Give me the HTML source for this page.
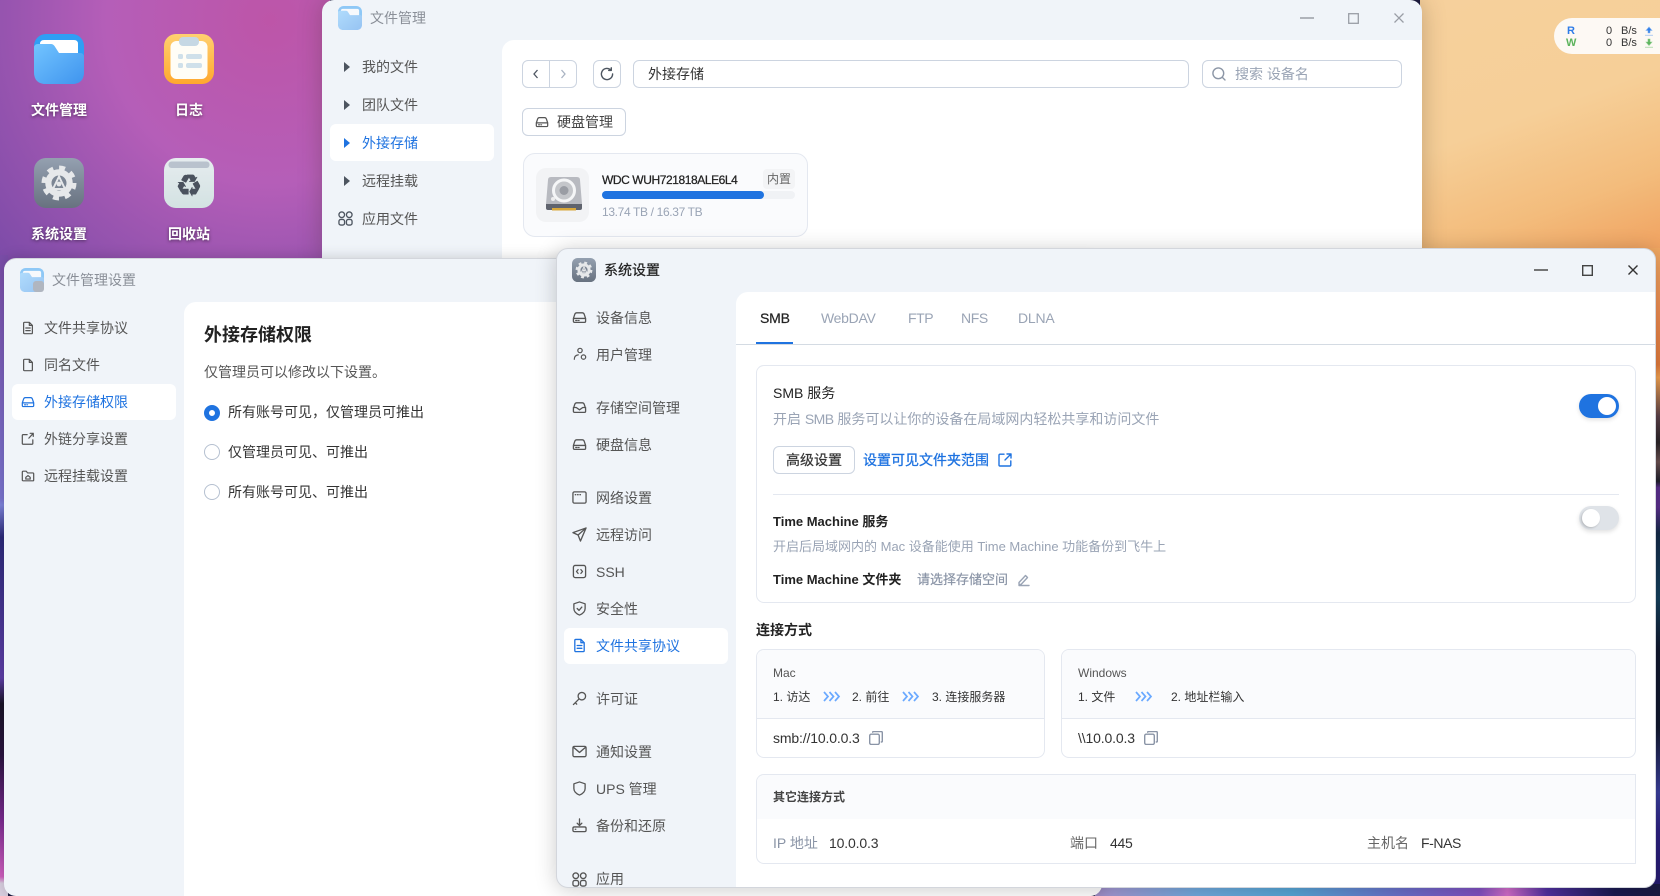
<!DOCTYPE html>
<html lang="zh-CN"><head><meta charset="utf-8"><title>飞牛</title>
<style>
*{box-sizing:border-box}
html,body{margin:0;padding:0;width:1660px;height:896px;overflow:hidden}
body{background:#1a1a40;font-family:"Liberation Sans","Noto Sans CJK SC",sans-serif;font-size:14px;color:#333}
#r{position:relative;width:1660px;height:896px;overflow:hidden}
.a{position:absolute}
.t{position:absolute;white-space:nowrap;line-height:20px;height:20px}
.w{position:absolute;overflow:hidden}
svg{position:absolute;display:block;overflow:visible}
.i{fill:none;stroke:currentColor;stroke-width:1.4;stroke-linecap:round;stroke-linejoin:round}
.dl{color:#fff;font-weight:700;text-shadow:0 1px 3px rgba(0,0,0,.5);font-size:14px;text-align:center;width:100px}
.nv{color:#555}
.bl{color:#1f73e0}
.gr{color:#9aa4b5}
.bd{border:1px solid #ccd4e0;border-radius:6px;background:#fff}
.card{border:1px solid #e4e8f0;border-radius:8px;background:#fff}
.s12{font-size:12px}
.b{font-weight:700}
</style></head>
<body><div id="r">
<svg width="0" height="0" style="position:absolute">
<defs>
<symbol id="hd" viewBox="0 0 16 16"><path class="i" d="M1.500 9 3 4.500Q3.600 3 5 3h6q1.400 0 2 1.500L14.500 9v3q0 1.200-1.200 1.200H2.700Q1.500 13.200 1.500 12zM1.500 9h13M4 11.200h1.500M7 11.200h.5"/></symbol>
<symbol id="doc" viewBox="0 0 16 16"><path class="i" d="M3 2.500q0-1 1-1h5.500L13 5v8.500q0 1-1 1H4q-1 0-1-1zM9.500 1.500V5H13M5.500 8h5M5.500 11h5"/></symbol>
<symbol id="copy" viewBox="0 0 14 14"><rect class="i" x=".7" y="3.200" width="9.600" height="10.200" rx="1.500"/><path class="i" d="M3.700 1.200q0-.6.6-.6h8q1 0 1 1v8.500q0 .9-1 .9"/></symbol>
<symbol id="gear" viewBox="0 0 50 50">
<defs><linearGradient id="gg" x1="0" y1="0" x2="0" y2="1"><stop offset="0" stop-color="#94a0b0"/><stop offset="1" stop-color="#687280"/></linearGradient></defs>
<rect width="50" height="50" rx="12" fill="url(#gg)"/>
<circle cx="25" cy="25" r="15" fill="none" stroke="#e6e8ea" stroke-width="5" stroke-dasharray="5.900 5.880"/>
<circle cx="25" cy="25" r="10.500" fill="none" stroke="#e6e8ea" stroke-width="6.500"/>
<circle cx="25" cy="25" r="7.500" fill="#7c8694"/>
<path d="M25 18.500 31 31H19Z" fill="none" stroke="#e6e8ea" stroke-width="2"/>
<circle cx="25" cy="26" r="2.400" fill="#e6e8ea"/>
</symbol>
<symbol id="folder" viewBox="0 0 50 50">
<defs><linearGradient id="fg" x1="0" y1="0" x2="1" y2="1"><stop offset="0" stop-color="#72c4ff"/><stop offset="1" stop-color="#3f94ee"/></linearGradient></defs>
<rect width="50" height="50" rx="12" fill="#2f9ef5"/>
<path d="M6 10q0-4 4-4h30q4 0 4 4v12H6z" fill="#fff"/>
<path d="M0 14q0-4 4-4h13q2 0 3.500 2L25 19h21q4 0 4 4v15q0 12-12 12H12Q0 50 0 38z" fill="url(#fg)"/>
</symbol>
</defs>
</svg>

<!-- wallpaper -->
<div class="a" style="left:0;top:0;width:330px;height:262px;background:radial-gradient(circle at 270px 20px,#bd55a8 0,#b55eb8 45%,#9a55b0 70%,#7c4ba8 100%)"></div>
<div class="a" style="left:1420px;top:0;width:240px;height:256px;background:linear-gradient(160deg,#f6d09c 0,#f6cf98 45%,#f3bc7c 75%,#f0a05e 100%)"></div>
<div class="a" style="left:0;top:255px;width:8px;height:641px;background:linear-gradient(180deg,#7a4da8 0,#7a74cf 38%,#7e85dc 39%,#2c2a7a 44%,#5e3fa8 66%,#1a1428 70%,#2a1440 78%,#7a2a90 88%,#d060c0 97%,#d9cfe0 98%)"></div>
<div class="a" style="left:1650px;top:248px;width:10px;height:648px;background:linear-gradient(180deg,#f0a862 0,#ec8a50 10%,#e07a3c 18%,#f0a050 20%,#5a4048 26%,#2a2428 30%,#6a5050 33%,#20202c 36%,#5a2f8c 37%,#5a2f8c 40%,#142a48 44%,#14405c 54%,#12182e 62%,#12182e 74%,#3a3f9c 84%,#2c2080 90%,#241a6a 100%)"></div>
<div class="a" style="left:1095px;top:884px;width:565px;height:12px;background:linear-gradient(90deg,#a893cf 0,#6fa8dc 18%,#55a5d5 35%,#6a6cc8 55%,#8050c0 68%,#d06cc8 73%,#5030a0 80%,#1a1a50 92%,#1a1a40 100%)"></div>

<!-- desktop icons -->
<svg style="left:34px;top:34px" width="50" height="50" viewBox="0 0 50 50"><use href="#folder"/></svg>
<svg style="left:164px;top:34px" width="50" height="50" viewBox="0 0 50 50">
<defs><linearGradient id="og" x1="0" y1="0" x2="0" y2="1"><stop offset="0" stop-color="#ffd070"/><stop offset="1" stop-color="#ffa82e"/></linearGradient></defs>
<rect width="50" height="50" rx="12" fill="url(#og)"/>
<rect x="6.500" y="7" width="37" height="38" rx="6" fill="#fffdf6"/>
<rect x="15" y="3" width="20" height="9" rx="4" fill="#c6d8e4"/>
<rect x="14" y="20" width="5" height="5" rx="1.500" fill="#cfe0ea"/><rect x="22" y="20" width="16" height="5" rx="2" fill="#cfe0ea"/>
<rect x="14" y="29" width="5" height="5" rx="1.500" fill="#cfe0ea"/><rect x="22" y="29" width="16" height="5" rx="2" fill="#cfe0ea"/>
</svg>
<svg style="left:34px;top:158px" width="50" height="50" viewBox="0 0 50 50"><use href="#gear"/></svg>
<svg style="left:164px;top:158px" width="50" height="50" viewBox="0 0 50 50">
<defs><linearGradient id="rg" x1="0" y1="0" x2="0" y2="1"><stop offset="0" stop-color="#e6ecef"/><stop offset="1" stop-color="#d3e2e2"/></linearGradient></defs>
<rect width="50" height="50" rx="12" fill="url(#rg)"/>
<rect x="4.500" y="3.500" width="41" height="6.500" rx="3" fill="#b9c2cd"/>
<text x="25" y="38" text-anchor="middle" font-size="30" font-family="DejaVu Sans" fill="#4a525e" stroke="#4a525e" stroke-width=".6">♻</text>
</svg>
<div class="t dl" style="left:9px;top:100px">文件管理</div>
<div class="t dl" style="left:139px;top:100px">日志</div>
<div class="t dl" style="left:9px;top:224px">系统设置</div>
<div class="t dl" style="left:139px;top:224px">回收站</div>

<!-- file manager window -->
<div class="w" style="left:322px;top:0;width:1100px;height:262px;background:#f0f4f9;border-radius:12px 12px 0 0;box-shadow:0 0 24px rgba(60,40,20,.28)">
 <div class="a" style="left:180px;top:40px;width:920px;height:230px;background:#fff;border-radius:12px 0 0 0"></div>
</div>
<svg style="left:338px;top:6px;opacity:.5" width="24" height="24" viewBox="0 0 50 50"><use href="#folder"/></svg>
<div class="t" style="left:370px;top:8px;color:#8a8f98">文件管理</div>
<svg style="left:1300px;top:12px" width="14" height="12"><path d="M0 6h14" stroke="#9a9ea6" stroke-width="1.500"/></svg>
<svg style="left:1348px;top:13px" width="11" height="11"><rect x=".7" y=".7" width="9.600" height="9.600" fill="none" stroke="#9a9ea6" stroke-width="1.300"/></svg>
<svg style="left:1394px;top:13px" width="10" height="10"><path d="M.5.5l9 9M9.500.5l-9 9" stroke="#9a9ea6" stroke-width="1.300"/></svg>
<svg style="left:344px;top:61px" width="6" height="12"><path d="M0 1l6 5-6 5z" fill="#4d5560"/></svg>
<svg style="left:344px;top:99px" width="6" height="12"><path d="M0 1l6 5-6 5z" fill="#4d5560"/></svg>
<div class="a" style="left:330px;top:124px;width:164px;height:37px;background:#fff;border-radius:6px"></div>
<svg style="left:344px;top:137px" width="6" height="12"><path d="M0 1l6 5-6 5z" fill="#1f73e0"/></svg>
<svg style="left:344px;top:175px" width="6" height="12"><path d="M0 1l6 5-6 5z" fill="#4d5560"/></svg>
<svg style="left:338px;top:211px;color:#4d5560" width="15" height="15" viewBox="0 0 16 16"><g class="i" stroke-width="1.500"><rect x="1" y="1" width="6" height="6" rx="3"/><rect x="9" y="1" width="6" height="6" rx="3"/><rect x="1" y="9" width="6" height="6" rx="2"/><rect x="9" y="9" width="6" height="6" rx="2"/></g></svg>
<div class="t nv" style="left:362px;top:57px">我的文件</div>
<div class="t nv" style="left:362px;top:95px">团队文件</div>
<div class="t bl" style="left:362px;top:133px">外接存储</div>
<div class="t nv" style="left:362px;top:171px">远程挂载</div>
<div class="t nv" style="left:362px;top:209px">应用文件</div>

<div class="a bd" style="left:522px;top:60px;width:55px;height:28px"></div>
<div class="a" style="left:549px;top:60px;width:1px;height:28px;background:#ccd4e0"></div>
<svg style="left:533px;top:69px" width="5" height="10"><path d="M4.500 1 1 5l3.500 4" fill="none" stroke="#4d5560" stroke-width="1.300"/></svg>
<svg style="left:561px;top:69px" width="5" height="10"><path d="M.5 1 4 5 .5 9" fill="none" stroke="#a9b3c2" stroke-width="1.300"/></svg>
<div class="a bd" style="left:593px;top:60px;width:28px;height:28px"></div>
<svg style="left:600px;top:67px;color:#4d5560" width="14" height="14" viewBox="0 0 14 14"><path class="i" d="M12.600 7a5.600 5.600 0 1 1-1.700-4M11.300 .8v2.600H8.700" stroke-width="1.400"/></svg>
<div class="a bd" style="left:633px;top:60px;width:556px;height:28px"></div>
<div class="t" style="left:648px;top:64px;color:#333">外接存储</div>
<div class="a bd" style="left:1202px;top:60px;width:200px;height:28px"></div>
<svg style="left:1212px;top:67px;color:#8c96a6" width="14" height="14" viewBox="0 0 14 14"><circle class="i" cx="6.300" cy="6.300" r="5.400"/><path class="i" d="M10.500 10.500 13 13"/></svg>
<div class="t gr" style="left:1235px;top:64px">搜索 设备名</div>
<div class="a bd" style="left:522px;top:108px;width:104px;height:28px"></div>
<svg style="left:535px;top:115px;color:#555" width="14" height="14" viewBox="0 0 16 16"><use href="#hd"/></svg>
<div class="t" style="left:557px;top:112px;color:#444">硬盘管理</div>

<div class="a" style="left:523px;top:153px;width:285px;height:84px;background:#fafbfd;border:1px solid #e4e8f0;border-radius:12px"></div>
<div class="a" style="left:536px;top:168px;width:53px;height:54px;background:#f2f3f5;border-radius:10px"></div>
<svg style="left:546px;top:177px" width="36" height="36" viewBox="0 0 36 36">
<path d="M2 3q0-3 3-3h26q3 0 3 3l2 24H0z" fill="#b8bac0"/>
<circle cx="18" cy="13.500" r="10.500" fill="#c4c6ca" stroke="#f5f6f7" stroke-width="3"/><circle cx="18" cy="13.500" r="4.500" fill="#9a9da4"/>
<circle cx="7" cy="22" r="2" fill="#eee"/>
<path d="M0 27h36v4q0 2-2 2H2q-2 0-2-2z" fill="#5f636d"/><rect x="6" y="31" width="24" height="2.500" fill="#d8a73a"/>
</svg>
<div class="t s12" style="left:602px;top:170px;color:#222;letter-spacing:-.42px;-webkit-text-stroke:.25px #222">WDC WUH721818ALE6L4</div>
<div class="a s12" style="left:763px;top:169px;width:32px;height:20px;background:#f3f4f6;border-radius:4px;text-align:center;line-height:20px;color:#666">内置</div>
<div class="a" style="left:602px;top:191px;width:193px;height:8px;background:#f0f2f5;border-radius:4px"><div style="width:162px;height:8px;background:#1f73e0;border-radius:4px"></div></div>
<div class="t gr s12" style="left:602px;top:202px;letter-spacing:-.35px">13.74 TB / 16.37 TB</div>

<!-- file settings window -->
<div class="w" style="left:4px;top:258px;width:1098px;height:638px;background:#f0f4f9;border-radius:12px;border-top:1px solid #d3d6dc;box-shadow:0 0 14px rgba(0,0,0,.18)">
 <div class="a" style="left:180px;top:43px;width:918px;height:620px;background:#fff;border-radius:12px 0 0 0"></div>
</div>
<svg style="left:20px;top:268px;opacity:.5" width="24" height="24" viewBox="0 0 50 50"><use href="#folder"/></svg>
<div class="a" style="left:33px;top:281px;width:11px;height:11px;border-radius:3px;background:#b0b6c0"></div>
<div class="t" style="left:52px;top:270px;color:#8a8f98">文件管理设置</div>
<div class="a" style="left:12px;top:384px;width:164px;height:36px;background:#fff;border-radius:6px"></div>
<svg style="left:21px;top:321px;color:#555" width="14" height="14" viewBox="0 0 16 16"><use href="#doc"/></svg>
<svg style="left:21px;top:358px;color:#555" width="14" height="14" viewBox="0 0 16 16"><path class="i" d="M3 2.500q0-1 1-1h5.500L13 5v8.500q0 1-1 1H4q-1 0-1-1zM9.500 1.500V5H13"/></svg>
<svg style="left:21px;top:395px;color:#1f73e0" width="14" height="14" viewBox="0 0 16 16"><use href="#hd"/></svg>
<svg style="left:21px;top:432px;color:#555" width="14" height="14" viewBox="0 0 16 16"><path class="i" d="M7 3H2.500q-1 0-1 1v9q0 1 1 1h10q1 0 1-1V9M9 7l5-5.500M10.500 1.500H14V5"/></svg>
<svg style="left:21px;top:469px;color:#555" width="14" height="14" viewBox="0 0 16 16"><path class="i" d="M1.500 3.500q0-1 1-1h3.500l1.500 2h6q1 0 1 1v7q0 1-1 1h-11q-1 0-1-1zM5.500 11.500h5v-2l-2.500-2-2.500 2z"/></svg>
<div class="t nv" style="left:44px;top:318px">文件共享协议</div>
<div class="t nv" style="left:44px;top:355px">同名文件</div>
<div class="t bl" style="left:44px;top:392px">外接存储权限</div>
<div class="t nv" style="left:44px;top:429px">外链分享设置</div>
<div class="t nv" style="left:44px;top:466px">远程挂载设置</div>
<div class="t b" style="left:204px;top:325px;font-size:18px;color:#222">外接存储权限</div>
<div class="t" style="left:204px;top:362px;color:#555">仅管理员可以修改以下设置。</div>
<div class="a" style="left:204px;top:405px;width:16px;height:16px;border-radius:50%;background:#fff;border:5px solid #1f73e0"></div>
<div class="a" style="left:204px;top:444px;width:16px;height:16px;border-radius:50%;background:#fff;border:1px solid #b5c0d0"></div>
<div class="a" style="left:204px;top:484px;width:16px;height:16px;border-radius:50%;background:#fff;border:1px solid #b5c0d0"></div>
<div class="t" style="left:228px;top:402px;color:#333">所有账号可见，仅管理员可推出</div>
<div class="t" style="left:228px;top:442px;color:#333">仅管理员可见、可推出</div>
<div class="t" style="left:228px;top:482px;color:#333">所有账号可见、可推出</div>

<!-- system window -->
<div class="w" style="left:556px;top:248px;width:1100px;height:640px;background:#f0f4f9;border-radius:12px;box-shadow:0 2px 22px rgba(0,0,0,.2);border:1px solid #d3d6dc">
 <div class="a" style="left:179px;top:43px;width:925px;height:600px;background:#fff;border-radius:12px 0 0 0"></div>
</div>
<svg style="left:572px;top:258px" width="24" height="24" viewBox="0 0 50 50"><use href="#gear"/></svg>
<div class="t" style="left:604px;top:260px;color:#222;-webkit-text-stroke:.25px #222">系统设置</div>
<svg style="left:1534px;top:264px" width="14" height="12"><path d="M0 6h14" stroke="#555" stroke-width="1.600"/></svg>
<svg style="left:1582px;top:265px" width="11" height="11"><rect x=".7" y=".7" width="9.600" height="9.600" fill="none" stroke="#444" stroke-width="1.400"/></svg>
<svg style="left:1628px;top:265px" width="10" height="10"><path d="M.5.5l9 9M9.500.5l-9 9" stroke="#333" stroke-width="1.400"/></svg>

<div class="a" style="left:564px;top:628px;width:164px;height:36px;background:#fff;border-radius:6px"></div>
<svg style="left:572px;top:310px;color:#555" width="15" height="15" viewBox="0 0 16 16"><use href="#hd"/></svg>
<svg style="left:573px;top:347px;color:#555" width="14" height="14" viewBox="0 0 16 16"><circle class="i" cx="8" cy="4" r="2.500"/><path class="i" d="M1.500 14q0-4.500 4.500-5"/><circle class="i" cx="12" cy="11.500" r="2.500"/></svg>
<svg style="left:572px;top:400px;color:#555" width="15" height="15" viewBox="0 0 16 16"><path class="i" d="M1.500 9 3 4.500Q3.600 3 5 3h6q1.400 0 2 1.500L14.500 9v3q0 1.200-1.200 1.200H2.700Q1.500 13.200 1.500 12zM1.500 8l3 0 3.500 2.500L11.500 8h3"/></svg>
<svg style="left:572px;top:437px;color:#555" width="15" height="15" viewBox="0 0 16 16"><use href="#hd"/></svg>
<svg style="left:572px;top:490px;color:#555" width="15" height="15" viewBox="0 0 16 16"><rect class="i" x="1" y="2" width="14" height="12" rx="1.500"/><path class="i" d="M3.500 5h.5M6 5h.5M8.500 5h.5"/></svg>
<svg style="left:572px;top:527px;color:#555" width="15" height="15" viewBox="0 0 16 16"><path class="i" d="M15 1 1 6l5.500 2.500L9 15zM6.500 8.500 15 1"/></svg>
<svg style="left:572px;top:564px;color:#555" width="15" height="15" viewBox="0 0 16 16"><rect class="i" x="1.500" y="1.500" width="13" height="13" rx="2"/><path class="i" d="M6.500 6 4.800 8l1.700 2M9.500 6l1.700 2-1.700 2"/></svg>
<svg style="left:572px;top:601px;color:#555" width="15" height="15" viewBox="0 0 16 16"><path class="i" d="M8 1l6 2v5q0 4.500-6 7-6-2.500-6-7V3zM5.500 8 7.500 10l3-3.500"/></svg>
<svg style="left:572px;top:638px;color:#1f73e0" width="15" height="15" viewBox="0 0 16 16"><use href="#doc"/></svg>
<svg style="left:572px;top:691px;color:#555" width="15" height="15" viewBox="0 0 16 16"><circle class="i" cx="10.500" cy="5.500" r="4"/><path class="i" d="M7.500 8.500 1.500 14.500M3.500 12.500 5 14"/></svg>
<svg style="left:572px;top:744px;color:#555" width="15" height="15" viewBox="0 0 16 16"><rect class="i" x="1" y="2.500" width="14" height="11" rx="1.500"/><path class="i" d="M1.500 3.500 8 9l6.500-5.500"/></svg>
<svg style="left:572px;top:781px;color:#555" width="15" height="15" viewBox="0 0 16 16"><path class="i" d="M8 1l6 2v5q0 4.500-6 7-6-2.500-6-7V3z"/></svg>
<svg style="left:572px;top:818px;color:#555" width="15" height="15" viewBox="0 0 16 16"><path class="i" d="M8 1v7M5.500 5.500 8 8l2.500-2.500M1 11q0-1.500 1.500-1.500h11Q15 9.500 15 11v2q0 1.500-1.500 1.500h-11Q1 14.500 1 13zM3.500 12h.5"/></svg>
<svg style="left:572px;top:872px;color:#555" width="15" height="15" viewBox="0 0 16 16"><g class="i" stroke-width="1.500"><rect x="1" y="1" width="6" height="6" rx="3"/><rect x="9" y="1" width="6" height="6" rx="3"/><rect x="1" y="9" width="6" height="6" rx="2"/><rect x="9" y="9" width="6" height="6" rx="2"/></g></svg>
<div class="t nv" style="left:596px;top:308px">设备信息</div>
<div class="t nv" style="left:596px;top:345px">用户管理</div>
<div class="t nv" style="left:596px;top:398px">存储空间管理</div>
<div class="t nv" style="left:596px;top:435px">硬盘信息</div>
<div class="t nv" style="left:596px;top:488px">网络设置</div>
<div class="t nv" style="left:596px;top:525px">远程访问</div>
<div class="t nv" style="left:596px;top:562px">SSH</div>
<div class="t nv" style="left:596px;top:599px">安全性</div>
<div class="t bl" style="left:596px;top:636px">文件共享协议</div>
<div class="t nv" style="left:596px;top:689px">许可证</div>
<div class="t nv" style="left:596px;top:742px">通知设置</div>
<div class="t nv" style="left:596px;top:779px">UPS 管理</div>
<div class="t nv" style="left:596px;top:816px">备份和还原</div>
<div class="t nv" style="left:596px;top:869px">应用</div>

<!-- tabs -->
<div class="a" style="left:736px;top:344px;width:920px;height:1px;background:#d4dbe3"></div>
<div class="a" style="left:756px;top:342px;width:37px;height:2px;background:#1f73e0"></div>
<div class="t" style="left:760px;top:308px;color:#222;letter-spacing:-.2px;-webkit-text-stroke:.2px #222">SMB</div>
<div class="t gr" style="left:821px;top:308px;letter-spacing:-.3px">WebDAV</div>
<div class="t gr" style="left:908px;top:308px;letter-spacing:-.4px">FTP</div>
<div class="t gr" style="left:961px;top:308px;letter-spacing:-.4px">NFS</div>
<div class="t gr" style="left:1018px;top:308px;letter-spacing:-.2px">DLNA</div>

<!-- SMB card -->
<div class="a card" style="left:756px;top:365px;width:880px;height:238px"></div>
<div class="t" style="left:773px;top:383px;color:#222">SMB 服务</div>
<div class="t gr" style="left:773px;top:409px">开启 <span style="letter-spacing:-.6px">SMB</span> 服务可以让你的设备在局域网内轻松共享和访问文件</div>
<div class="a" style="left:773px;top:446px;width:82px;height:28px;border:1px solid #ccd4e0;border-radius:6px;text-align:center;line-height:26px;color:#333;-webkit-text-stroke:.2px #333">高级设置</div>
<div class="t bl" style="left:863px;top:450px;-webkit-text-stroke:.3px #1f73e0">设置可见文件夹范围</div>
<svg style="left:998px;top:453px;color:#1f73e0" width="14" height="14" viewBox="0 0 14 14"><path class="i" d="M6 1.200H2q-1 0-1 1v9.800q0 1 1 1h9.800q1 0 1-1V8M7 7l6-6M9 1h4v4" stroke-width="1.500"/></svg>
<div class="a" style="left:773px;top:494px;width:846px;height:1px;background:#e4e8f0"></div>
<div class="a" style="left:1579px;top:394px;width:40px;height:24px;border-radius:12px;background:#1f73e0;box-shadow:0 2px 4px rgba(0,0,0,.12)"><div class="a" style="left:19px;top:3px;width:18px;height:18px;border-radius:50%;background:#fff"></div></div>
<div class="a" style="left:1579px;top:506px;width:40px;height:24px;border-radius:12px;background:#dfe3e8;box-shadow:0 2px 4px rgba(0,0,0,.12)"><div class="a" style="left:3px;top:3px;width:18px;height:18px;border-radius:50%;background:#fff;box-shadow:-1px 1px 2px rgba(0,0,0,.2)"></div></div>
<div class="t b" style="left:773px;top:512px;color:#222;font-size:13px">Time Machine 服务</div>
<div class="t gr" style="left:773px;top:537px;font-size:13px">开启后局域网内的 Mac 设备能使用 Time Machine 功能备份到飞牛上</div>
<div class="t b" style="left:773px;top:570px;color:#222;font-size:13px">Time Machine 文件夹</div>
<div class="t" style="left:917px;top:570px;color:#8a94a6;font-size:13px;-webkit-text-stroke:.2px #8a94a6">请选择存储空间</div>
<svg style="left:1018px;top:574px;color:#9aa4b5" width="12" height="12" viewBox="0 0 12 12"><path class="i" d="M1 8.500 7.500 1.500l2 2L3 10.500H1zM1 11.500h10" stroke-width="1"/></svg>

<!-- connection -->
<div class="t b" style="left:756px;top:620px;color:#222">连接方式</div>
<div class="a card" style="left:756px;top:649px;width:289px;height:109px;overflow:hidden"><div style="height:69px;background:#fafbfd;border-bottom:1px solid #e4e8f0"></div></div>
<div class="a card" style="left:1061px;top:649px;width:575px;height:109px;overflow:hidden"><div style="height:69px;background:#fafbfd;border-bottom:1px solid #e4e8f0"></div></div>
<div class="t s12" style="left:773px;top:663px;color:#555">Mac</div>
<div class="t s12" style="left:773px;top:687px;color:#333">1. 访达</div>
<div class="t s12" style="left:852px;top:687px;color:#333">2. 前往</div>
<div class="t s12" style="left:932px;top:687px;color:#333">3. 连接服务器</div>
<svg style="left:823px;top:691px" width="17" height="11" fill="none" stroke="#6aa9ff" stroke-width="1.700"><path d="M1 1l4 4.500-4 4.500M6.500 1l4 4.500-4 4.500M12 1l4 4.500-4 4.500"/></svg>
<svg style="left:902px;top:691px" width="17" height="11" fill="none" stroke="#6aa9ff" stroke-width="1.700"><path d="M1 1l4 4.500-4 4.500M6.500 1l4 4.500-4 4.500M12 1l4 4.500-4 4.500"/></svg>
<div class="t" style="left:773px;top:728px;color:#333;letter-spacing:-.15px">smb://10.0.0.3</div>
<svg style="left:869px;top:731px;color:#8a94a6" width="14" height="14" viewBox="0 0 14 14"><use href="#copy"/></svg>
<div class="t s12" style="left:1078px;top:663px;color:#555">Windows</div>
<div class="t s12" style="left:1078px;top:687px;color:#333">1. 文件</div>
<svg style="left:1135px;top:691px" width="17" height="11" fill="none" stroke="#6aa9ff" stroke-width="1.700"><path d="M1 1l4 4.500-4 4.500M6.500 1l4 4.500-4 4.500M12 1l4 4.500-4 4.500"/></svg>
<div class="t s12" style="left:1171px;top:687px;color:#333">2. 地址栏输入</div>
<div class="t" style="left:1078px;top:728px;color:#333;letter-spacing:-.15px">\\10.0.0.3</div>
<svg style="left:1144px;top:731px;color:#8a94a6" width="14" height="14" viewBox="0 0 14 14"><use href="#copy"/></svg>

<div class="a" style="left:756px;top:774px;width:880px;height:90px;border:1px solid #e4e8f0;border-radius:8px 0 0 8px;background:#fff;overflow:hidden"><div style="height:44px;background:#fafbfd"></div></div>
<div class="t b s12" style="left:773px;top:787px;color:#444">其它连接方式</div>
<div class="t" style="left:773px;top:833px;color:#8a94a6">IP 地址</div>
<div class="t" style="left:829px;top:833px;color:#333;letter-spacing:-.15px">10.0.0.3</div>
<div class="t" style="left:1070px;top:833px;color:#666">端口</div>
<div class="t" style="left:1110px;top:833px;color:#333;letter-spacing:-.3px">445</div>
<div class="t" style="left:1367px;top:833px;color:#666">主机名</div>
<div class="t" style="left:1421px;top:833px;color:#333;letter-spacing:-.4px">F-NAS</div>

<!-- widget -->
<div class="a" style="left:1554px;top:18px;width:106px;height:36px;background:#fdf9f4;border-radius:18px 0 0 18px"></div>
<div class="t b" style="left:1567px;top:21px;font-size:11px;color:#2f7de8">R</div>
<div class="t b" style="left:1566px;top:33px;font-size:11px;color:#5cb35c">W</div>
<div class="t" style="left:1606px;top:21px;font-size:11px;color:#333">0</div>
<div class="t" style="left:1606px;top:33px;font-size:11px;color:#333">0</div>
<div class="t" style="left:1621px;top:21px;font-size:11px;color:#333">B/s</div>
<div class="t" style="left:1621px;top:33px;font-size:11px;color:#333">B/s</div>
<svg style="left:1645px;top:27px" width="8" height="9"><path d="M4 0 7 3.500H5V6H3V3.500H1zM0 8.200h8" fill="#2f7de8" stroke="#7fb0f0" stroke-width=".6"/></svg>
<svg style="left:1645px;top:39px" width="8" height="9"><path d="M3 0h2v3h2L4 6.500 1 3h2zM0 8.200h8" fill="#5cb35c" stroke="#8acb8a" stroke-width=".6"/></svg>
</div></body></html>
